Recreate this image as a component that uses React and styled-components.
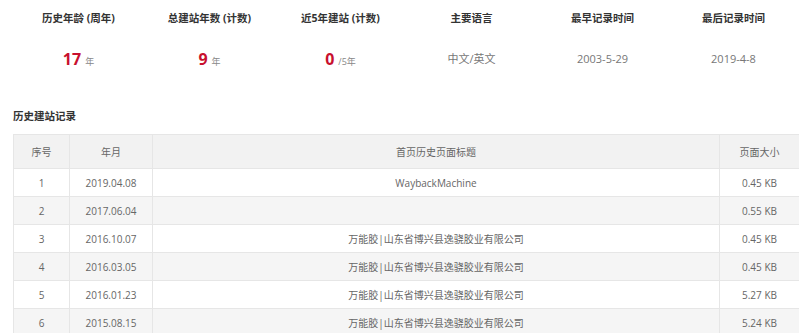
import React from "react";
import styled, { createGlobalStyle } from "styled-components";

const Global = createGlobalStyle`
  html, body { margin: 0; padding: 0; background: #fff; overflow: hidden; }
  body { font-family: "Open Sans", "Noto Sans CJK SC", sans-serif; }
`;

const Page = styled.div`
  width: 800px;
  padding-left: 13px;
  box-sizing: border-box;
`;

const Stats = styled.div`
  display: grid;
  grid-template-columns: repeat(6, 131px);
  padding-top: 10px;
`;

const Stat = styled.div`
  display: flex;
  flex-direction: column;
  align-items: center;
`;

const StatTitle = styled.div`
  font-size: 10.5px;
  font-weight: bold;
  color: #333;
  line-height: 16px;
  height: 16px;
`;

const StatValue = styled.div`
  margin-top: 23px;
  height: 20px;
  display: flex;
  align-items: baseline;
  justify-content: center;
  color: #777;
  font-size: 11px;
  line-height: 20px;
`;

const BigNum = styled.span`
  color: #c8102e;
  font-size: 16px;
  font-weight: bold;
  margin-right: 4px;
`;

const Unit = styled.span`
  font-size: 9px;
  color: #888;
`;

const SectionTitle = styled.div`
  margin-top: 39px;
  font-size: 10.5px;
  font-weight: bold;
  color: #333;
  line-height: 16px;
`;

const Table = styled.table`
  margin-top: 10px;
  border-collapse: collapse;
  width: 800px;
  table-layout: fixed;
  font-size: 10px;
  color: #666;
`;

const Th = styled.th`
  background: #f2f2f2;
  font-weight: normal;
  height: 34px;
  padding: 0;
  border: 1px solid #e6e6e6;
  text-align: center;
  box-sizing: border-box;
`;

const Row = styled.tr`
  background: ${(p) => (p.$alt ? "#f5f5f5" : "#fff")};
`;

const Td = styled.td`
  height: 28px;
  padding: 0;
  border: 1px solid #e6e6e6;
  text-align: center;
  box-sizing: border-box;
`;

const stats = [
  { title: "历史年龄 (周年)", num: "17", unit: "年" },
  { title: "总建站年数 (计数)", num: "9", unit: "年" },
  { title: "近5年建站 (计数)", num: "0", unit: "/5年" },
  { title: "主要语言", text: "中文/英文" },
  { title: "最早记录时间", text: "2003-5-29" },
  { title: "最后记录时间", text: "2019-4-8" },
];

const company = "万能胶|山东省博兴县逸骁胶业有限公司";
const rows = [
  ["1", "2019.04.08", "WaybackMachine", "0.45 KB"],
  ["2", "2017.06.04", "", "0.55 KB"],
  ["3", "2016.10.07", company, "0.45 KB"],
  ["4", "2016.03.05", company, "0.45 KB"],
  ["5", "2016.01.23", company, "5.27 KB"],
  ["6", "2015.08.15", company, "5.24 KB"],
];

export default function App() {
  return (
    <Page>
      <Global />
      <Stats>
        {stats.map((s) => (
          <Stat key={s.title}>
            <StatTitle>{s.title}</StatTitle>
            <StatValue>
              {s.num ? (
                <>
                  <BigNum>{s.num}</BigNum>
                  <Unit>{s.unit}</Unit>
                </>
              ) : (
                s.text
              )}
            </StatValue>
          </Stat>
        ))}
      </Stats>
      <SectionTitle>历史建站记录</SectionTitle>
      <Table>
        <colgroup>
          <col style={{ width: 56 }} />
          <col style={{ width: 83 }} />
          <col style={{ width: 567 }} />
          <col style={{ width: 94 }} />
        </colgroup>
        <thead>
          <tr>
            <Th>序号</Th>
            <Th>年月</Th>
            <Th>首页历史页面标题</Th>
            <Th style={{ paddingRight: 14 }}>页面大小</Th>
          </tr>
        </thead>
        <tbody>
          {rows.map((r, i) => (
            <Row key={r[0]} $alt={i % 2 === 1}>
              <Td>{r[0]}</Td>
              <Td>{r[1]}</Td>
              <Td>{r[2]}</Td>
              <Td style={{ paddingRight: 14 }}>{r[3]}</Td>
            </Row>
          ))}
        </tbody>
      </Table>
    </Page>
  );
}
